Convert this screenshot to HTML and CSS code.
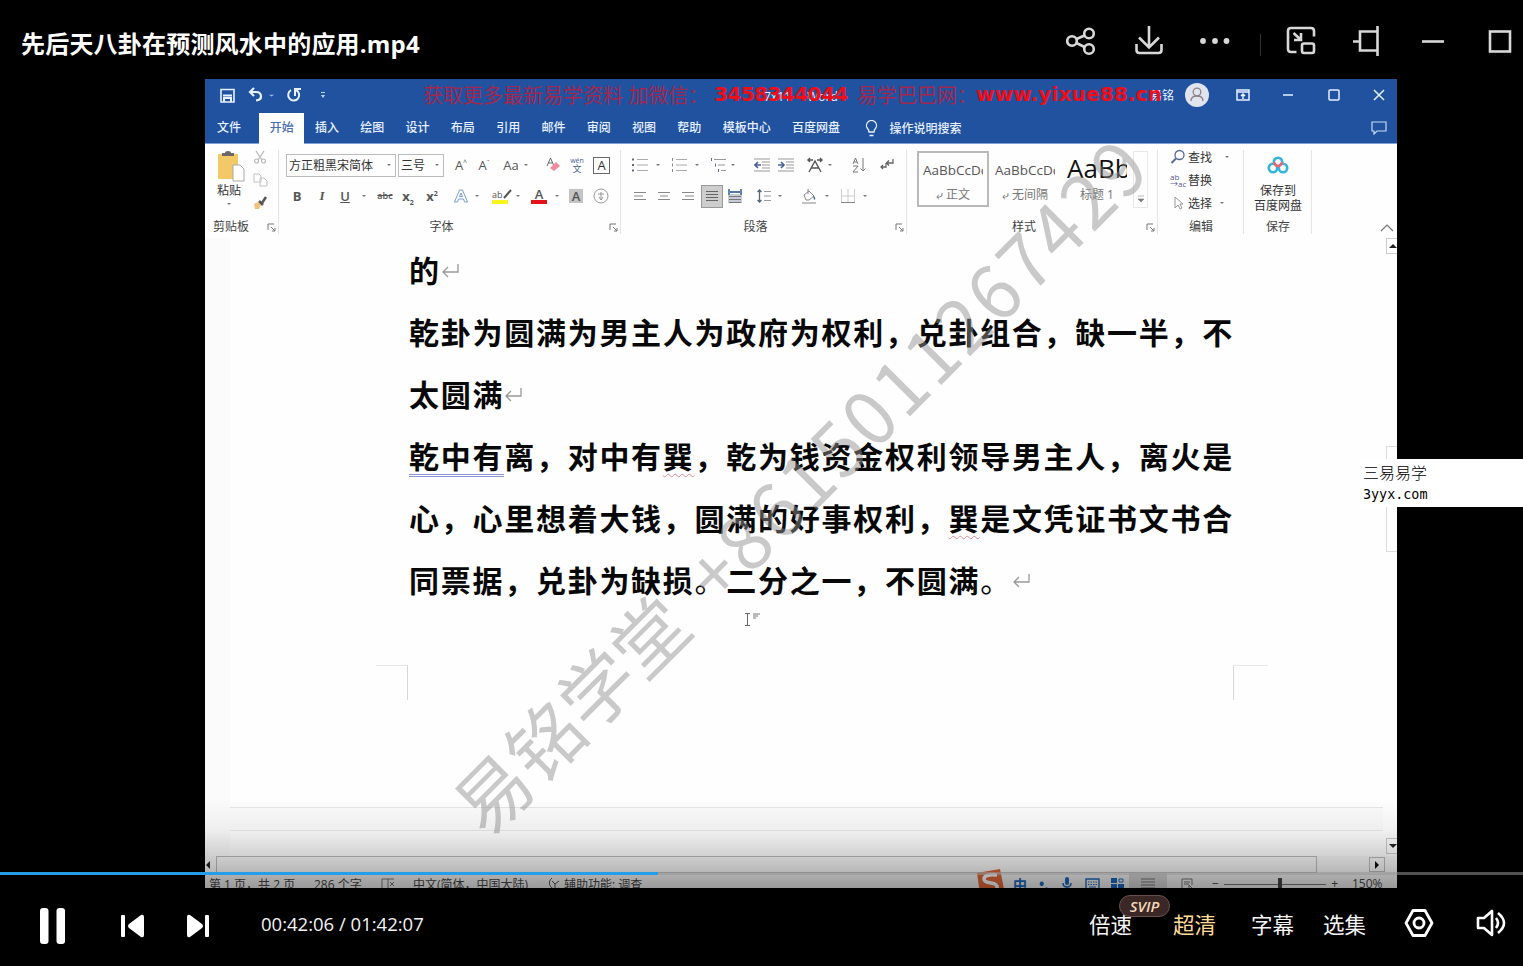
FILE: index.html
```html
<!DOCTYPE html>
<html lang="zh-CN">

<head>
    <meta charset="UTF-8">
    <meta name="viewport" content="width=device-width, initial-scale=1.0">
    <title>先后天八卦在预测风水中的应用.mp4</title>
    <link rel="stylesheet" href="styles.css">
</head>

<body>
    <svg class="sprite" width="0" height="0">
        <symbol id="caret" viewBox="0 0 8 8"><path d="M2 3l2 2 2-2z" fill="#777"/></symbol>
        <symbol id="launch" viewBox="0 0 9 9"><path d="M1 7V1h6M4 4l4 4M8 5v3H5" fill="none" stroke="#777"/></symbol>
        <symbol id="enter" viewBox="0 0 20 20"><path d="M18 3v8H3M8 6l-5 5 5 5" fill="none" stroke="#999" stroke-width="1.3"/></symbol>
    </svg>

    <div class="player">
        <header class="player-header">
            <h1 class="player-title">先后天八卦在预测风水中的应用.mp4</h1>
            <div class="window-tools">
                <svg width="30" height="30" viewBox="0 0 30 30"><g class="line"><circle cx="6" cy="15" r="4.8"/><circle cx="23" cy="7.5" r="4.8"/><circle cx="23" cy="23" r="4.8"/><path d="M10.500 13l8-3.500M10.500 17l8 4"/></g></svg>
                <svg width="30" height="30" viewBox="0 0 30 30"><path class="line" d="M15 0v21M5 11.500l10 10 10-10M2.500 18v6q0 3 3 3h19q3 0 3-3v-6"/></svg>
                <svg width="30" height="30" viewBox="0 0 30 30"><g fill="#d8d8d8"><circle cx="3" cy="15" r="2.900"/><circle cx="15" cy="15" r="2.900"/><circle cx="26.500" cy="15" r="2.900"/></g></svg>
                <span class="tool-sep"></span>
                <svg width="30" height="30" viewBox="0 0 30 30"><path class="line" d="M10.500 26H5q-3 0-3-3V5q0-3 3-3h20q3 0 3 3v5.500M7.500 7l7 6.500M15 7v7H8"/><rect class="line" x="16" y="17.500" width="12" height="9.500" rx="2"/></svg>
                <svg width="30" height="30" viewBox="0 0 30 30"><path class="line" d="M1 15.500h6M25.500 0v30M25.500 5.500H8v19h17.500"/></svg>
                <svg width="30" height="30" viewBox="0 0 30 30"><path class="line" d="M4 15.500h22"/></svg>
                <svg width="30" height="30" viewBox="0 0 30 30"><rect class="line" x="5" y="5.500" width="20" height="20"/></svg>
            </div>
        </header>

        <main class="video">
            <div class="word">
                <div class="titlebar">
                    <div class="quick">
                        <svg width="15" height="15" viewBox="0 0 15 15"><path d="M1 1.500h13v12.500H1z" fill="none" stroke="#e6f0ff" stroke-width="1.600"/><path d="M3 7.500h9M4 14v-4h7v4" fill="none" stroke="#e6f0ff" stroke-width="2"/></svg>
                        <svg width="16" height="16" viewBox="0 0 16 16"><path d="M6 1L2 5l4 4M2 5h6q5 0 5 4.500Q13 13 8 13.500" fill="none" stroke="#e6f0ff" stroke-width="2.200"/></svg>
                        <svg width="7" height="7" viewBox="0 0 8 8"><path d="M1 3l3 2 3-2z" fill="#9cc0ee"/></svg>
                        <svg width="16" height="16" viewBox="0 0 16 16"><path d="M10 3a5.500 5.500 0 1 1-5 .2M9 9V2h6" fill="none" stroke="#e6f0ff" stroke-width="2"/></svg>
                        <svg width="6" height="8" viewBox="0 0 6 8"><path d="M1 1h4v1H1zM1 4h4L3 7z" fill="#bcd5f5"/></svg>
                    </div>
                    <div class="doc-name">7x11 &nbsp;-&nbsp; Word</div>
                    <div class="account">易铭
                        <svg width="24" height="24" viewBox="0 0 24 24"><circle cx="12" cy="12" r="12" fill="#dfe4ef"/><circle cx="12" cy="9" r="3.800" fill="none" stroke="#8c8286" stroke-width="1.300"/><path d="M6 18q0-5 6-5t6 5" fill="none" stroke="#8c8286" stroke-width="1.300"/></svg>
                    </div>
                    <div class="word-window">
                        <svg width="14" height="12" viewBox="0 0 14 12"><path d="M1 1h12v10H1zM1 3h12M7 10V5M5 7l2-2 2 2" fill="none" stroke="#e6f0ff" stroke-width="1.500"/></svg>
                        <svg width="12" height="12" viewBox="0 0 12 12"><path d="M1 6h10" stroke="#e6f0ff" stroke-width="1.500"/></svg>
                        <svg width="12" height="12" viewBox="0 0 12 12"><rect x="1" y="1" width="10" height="10" rx="1" fill="none" stroke="#e6f0ff" stroke-width="1.500"/></svg>
                        <svg width="12" height="12" viewBox="0 0 12 12"><path d="M1 1l10 10M11 1L1 11" stroke="#e6f0ff" stroke-width="1.500"/></svg>
                    </div>
                </div>

                <nav class="tabs">
                    <span class="tab tab-file">文件</span>
                    <span class="tab active">开始</span>
                    <span class="tab">插入</span>
                    <span class="tab">绘图</span>
                    <span class="tab">设计</span>
                    <span class="tab">布局</span>
                    <span class="tab">引用</span>
                    <span class="tab">邮件</span>
                    <span class="tab">审阅</span>
                    <span class="tab">视图</span>
                    <span class="tab">帮助</span>
                    <span class="tab">模板中心</span>
                    <span class="tab">百度网盘</span>
                    <svg class="bulb" width="13" height="17" viewBox="0 0 13 17"><path d="M4 12q0-2-1.500-3.500a5 5 0 1 1 8 0Q9 10 9 12zM4.500 15.500h4" fill="none" stroke="#e6f0ff" stroke-width="1.300"/></svg>
                    <span class="tell-me">操作说明搜索</span>
                    <svg class="comment" width="16" height="14" viewBox="0 0 16 14"><path d="M1 1h14v9H6l-3 3v-3H1z" fill="none" stroke="#c6daf5" stroke-width="1.200"/></svg>
                </nav>

                <section class="ribbon">
                    <div class="group clipboard">
                        <div class="group-body">
                            <div class="paste">
                                <svg width="29" height="32" viewBox="0 0 29 32"><rect x="1" y="4" width="20" height="25" rx="1" fill="#f3c867"/><path d="M5 6V3h3q0-2 3-2t3 2h3v3z" fill="#6d6669"/><path d="M16 15h7l4 4v12H16z" fill="#fff" stroke="#aaa"/></svg>
                                <span>粘贴</span>
                                <svg width="8" height="8"><use href="#caret"/></svg>
                            </div>
                            <div class="clip-tools">
                                <svg width="14" height="14" viewBox="0 0 14 14"><g fill="none" stroke="#b8b8b8" stroke-width="1.200"><path d="M3 1l6 9M11 1L5 10"/><circle cx="3.500" cy="11" r="2"/><circle cx="10.500" cy="11" r="2"/></g></svg>
                                <svg width="15" height="14" viewBox="0 0 15 14"><path d="M1 1h5l2 2v6H1zM7 5h4l3 3v5H7z" fill="#fff" stroke="#c2c2c2"/></svg>
                                <svg width="14" height="14" viewBox="0 0 14 14"><path d="M1 8l4-2 3 3-2 4H2z" fill="#f0c27c"/><path d="M6 5l4 4M9 7l4-6" stroke="#555" stroke-width="2.500"/></svg>
                            </div>
                        </div>
                        <div class="group-label">剪贴板<svg width="9" height="9"><use href="#launch"/></svg></div>
                    </div>

                    <div class="group font">
                        <div class="tool-row font-row-1">
                            <span class="select font-name">方正粗黑宋简体<svg width="8" height="8"><use href="#caret"/></svg></span>
                            <span class="select font-size">三号<svg width="8" height="8"><use href="#caret"/></svg></span>
                            <span class="glyph">A<sup>^</sup></span>
                            <span class="glyph">A<sup>ˇ</sup></span>
                            <span class="glyph">Aa</span>
                            <svg width="8" height="8"><use href="#caret"/></svg>
                            <svg width="16" height="16" viewBox="0 0 16 16"><path d="M1 9l3.500-8L8 9M2.500 6h4" fill="none" stroke="#666"/><path d="M4 11l6-6 4 4-6 5z" fill="#ee8c9d"/></svg>
                            <span class="pinyin"><i>wén</i>文</span>
                            <span class="boxed">A</span>
                        </div>
                        <div class="tool-row font-row-2">
                            <span class="glyph bold">B</span>
                            <span class="glyph italic">I</span>
                            <span class="glyph underline">U</span>
                            <svg width="8" height="8"><use href="#caret"/></svg>
                            <span class="glyph strike">abc</span>
                            <span class="glyph bold">x<sub>2</sub></span>
                            <span class="glyph bold">x<sup>2</sup></span>
                            <svg width="16" height="16" viewBox="0 0 16 16"><path d="M1.500 14L6.500 2h3l5 12h-3l-1-3h-5l-1 3zM6.500 8.500h3L8 5z" fill="#fff" stroke="#7c9fd0"/></svg>
                            <svg width="8" height="8"><use href="#caret"/></svg>
                            <span class="glyph mark">ab<svg width="9" height="10" viewBox="0 0 9 10"><path d="M1 9l7-8" stroke="#555" stroke-width="2"/></svg></span>
                            <svg width="8" height="8"><use href="#caret"/></svg>
                            <span class="glyph red">A</span>
                            <svg width="8" height="8"><use href="#caret"/></svg>
                            <span class="glyph shade">A</span>
                            <svg width="16" height="16" viewBox="0 0 16 16"><circle cx="8" cy="8" r="7" fill="none" stroke="#999"/><path d="M5 6h6M8 4v8M6 9l2 3 2-3" fill="none" stroke="#999"/></svg>
                        </div>
                        <div class="group-label">字体<svg width="9" height="9"><use href="#launch"/></svg></div>
                    </div>

                    <div class="group paragraph">
                        <div class="tool-row para-row-1">
                            <svg width="16" height="16" viewBox="0 0 16 16"><path d="M5 2.500h11M5 8h11M5 13.500h11" stroke="#aaa"/><path d="M0 2.500h2M0 8h2M0 13.500h2" stroke="#668" stroke-width="2"/></svg>
                            <svg width="8" height="8"><use href="#caret"/></svg>
                            <svg width="16" height="16" viewBox="0 0 16 16"><path d="M5 2.500h11M5 8h11M5 13.500h11" stroke="#aaa"/><path d="M1.500 1v3M1.500 6.500v3M1.500 12v3" stroke="#889"/></svg>
                            <svg width="8" height="8"><use href="#caret"/></svg>
                            <svg width="16" height="16" viewBox="0 0 16 16"><path d="M4 2.500h12M8 8h7M11 13.500h5" stroke="#999"/><path d="M1.500 1v3M5.500 6.500v3M8.500 12v3" stroke="#668"/></svg>
                            <svg width="8" height="8"><use href="#caret"/></svg>
                            <svg width="16" height="16" viewBox="0 0 16 16"><path d="M0 2h16M8 5h8M8 8h8M8 11h8M0 14h16" stroke="#999"/><path d="M7 8H1M4 5L1 8l3 3" fill="none" stroke="#4a5f9a" stroke-width="1.600"/></svg>
                            <svg width="16" height="16" viewBox="0 0 16 16"><path d="M0 2h16M8 5h8M8 8h8M8 11h8M0 14h16" stroke="#999"/><path d="M0 8h6M3 5l3 3-3 3" fill="none" stroke="#4a5f9a" stroke-width="1.600"/></svg>
                            <svg width="16" height="16" viewBox="0 0 16 16"><path d="M2 15l6-11 6 11M4 11h8M1 3h5M10 3h5M3 1L1 3l2 2M13 1l2 2-2 2" fill="none" stroke="#555" stroke-width="1.400"/></svg>
                            <svg width="8" height="8"><use href="#caret"/></svg>
                            <svg width="16" height="16" viewBox="0 0 16 16"><path d="M2 7l2.500-6L7 7M3 5h3M2 9h5l-5 6h5M12 1v13M9.500 11.500L12 14l2.500-2.500" fill="none" stroke="#777"/></svg>
                            <svg width="16" height="16" viewBox="0 0 16 16"><path d="M14 2v4H8M10 3.500L7.500 6l2.500 2.500" fill="none" stroke="#666" stroke-width="1.300"/><path d="M7 6v4H2M4 8l-2 2 2 2" fill="none" stroke="#666" stroke-width="1.300"/></svg>
                        </div>
                        <div class="tool-row para-row-2">
                            <svg width="16" height="16" viewBox="0 0 16 16"><path d="M2 4.500h12M2 8h9M2 11.500h12" stroke="#888"/></svg>
                            <svg width="16" height="16" viewBox="0 0 16 16"><path d="M2 4.500h12M4 8h8M2 11.500h12" stroke="#888"/></svg>
                            <svg width="16" height="16" viewBox="0 0 16 16"><path d="M2 4.500h12M5 8h9M2 11.500h12" stroke="#888"/></svg>
                            <span class="pressed"><svg width="16" height="16" viewBox="0 0 16 16"><path d="M2 3.500h12M2 6.500h12M2 9.500h12M2 12.500h12" stroke="#666"/></svg></span>
                            <svg width="16" height="16" viewBox="0 0 16 16"><path d="M1 6h14v9H1z" fill="#c8ccd6"/><path d="M2 8.500h12M2 11.500h12M2 14.500h12" stroke="#777"/><path d="M2 1v6M14 1v6M3 4h10" stroke="#5474b0" stroke-width="1.800"/></svg>
                            <svg width="16" height="16" viewBox="0 0 16 16"><path d="M8 3.500h7M8 8h7M8 12.500h7" stroke="#999"/><path d="M3.500 2v12M1.500 4l2-2 2 2M1.500 12l2 2 2-2" fill="none" stroke="#567" stroke-width="1.300"/></svg>
                            <svg width="8" height="8"><use href="#caret"/></svg>
                            <svg width="16" height="16" viewBox="0 0 16 16"><path d="M3 7l5-4 5 5-5 4H5zM7 1v5M1 15h14" fill="none" stroke="#888"/><path d="M12 7q4 4 1 5z" fill="#4a5f9a"/></svg>
                            <svg width="8" height="8"><use href="#caret"/></svg>
                            <svg width="16" height="16" viewBox="0 0 16 16"><path d="M1.500 1v13M8 1v13M14.500 1v13M1 8h14" stroke="#ccc"/><path d="M1 14.500h14" stroke="#888"/></svg>
                            <svg width="8" height="8"><use href="#caret"/></svg>
                        </div>
                        <div class="group-label">段落<svg width="9" height="9"><use href="#launch"/></svg></div>
                    </div>

                    <div class="group styles">
                        <div class="group-body">
                            <div class="style-item chosen"><b>AaBbCcDc</b><span>⤶ 正文</span></div>
                            <div class="style-item"><b>AaBbCcDc</b><span>⤶ 无间隔</span></div>
                            <div class="style-item heading"><b>AaBb</b><span>标题 1</span></div>
                            <div class="style-scroll"><svg width="8" height="8" viewBox="0 0 8 8"><path d="M1 1h6M1 4h6L4 7z" fill="#777" stroke="#888" stroke-width=".6"/></svg></div>
                        </div>
                        <div class="group-label">样式<svg width="9" height="9"><use href="#launch"/></svg></div>
                    </div>

                    <div class="group editing">
                        <div class="group-body">
                            <div class="edit-item"><svg width="16" height="16" viewBox="0 0 16 16"><circle cx="9.500" cy="6" r="4.500" fill="none" stroke="#566b98" stroke-width="1.300"/><path d="M6 9.500L1.500 14" stroke="#566b98" stroke-width="2"/></svg>查找<svg class="wide" width="8" height="8"><use href="#caret"/></svg></div>
                            <div class="edit-item"><span class="swap">ab<br>→ac</span>替换</div>
                            <div class="edit-item"><svg width="16" height="16" viewBox="0 0 16 16"><path d="M5 2v11l3-3 2 4 2-1-2-4h3z" fill="#fff" stroke="#999"/></svg>选择<svg width="8" height="8"><use href="#caret"/></svg></div>
                        </div>
                        <div class="group-label">编辑</div>
                    </div>

                    <div class="group netdisk">
                        <div class="group-body">
                            <svg width="22" height="18" viewBox="0 0 22 18"><g fill="none" stroke-width="2.600"><circle cx="6" cy="12" r="4.200" stroke="#35b5d8"/><circle cx="16" cy="12" r="4.200" stroke="#35b5d8"/><path d="M6.800 6a4.200 4.200 0 1 1 8.400 0" stroke="#35b5d8"/><path d="M6.800 6q1 3.500 4.200 4.200 3.200-.7 4.200-4.200" stroke="#e86478"/></g></svg>
                            <span>保存到<br>百度网盘</span>
                        </div>
                        <div class="group-label">保存</div>
                    </div>
                    <svg class="collapse" width="14" height="8" viewBox="0 0 14 8"><path d="M1 7l6-6 6 6" fill="none" stroke="#777" stroke-width="1.200"/></svg>
                </section>

                <section class="document">
                    <article class="page">
                        <p>的<svg class="enter" width="20" height="20"><use href="#enter"/></svg></p>
                        <p>乾卦为圆满为男主人为政府为权利，兑卦组合，缺一半，不</p>
                        <p>太圆满<svg class="enter" width="20" height="20"><use href="#enter"/></svg></p>
                        <p><span class="grammar">乾中有</span>离，对中有<span class="spelling">巽</span>，乾为钱资金权利领导男主人，离火是</p>
                        <p>心，心里想着大钱，圆满的好事权利，<span class="spelling">巽</span>是文凭证书文书合</p>
                        <p>同票据，兑卦为缺损<span class="stop">。</span>二分之一，不圆满<span class="stop">。</span><svg class="enter" width="20" height="20"><use href="#enter"/></svg></p>
                        <div class="pointer"><svg width="17" height="15" viewBox="0 0 17 15"><path d="M1 1.500h5M3.500 1.500v12M1 13.500h5" fill="none" stroke="#666"/><path d="M9 2h7M9 4h5M9 6h3" stroke="#777"/></svg></div>
                        <div class="crop-marks"><i class="crop-left"></i><i class="crop-right"></i></div>
                    </article>
                    <div class="next-page"></div>
                    <aside class="v-scroll">
                        <span class="arrow"><svg width="8" height="5" viewBox="0 0 8 5"><path d="M0 4l4-4 4 4z" fill="#222"/></svg></span>
                        <span class="thumb"></span>
                        <span class="arrow"><svg width="8" height="5" viewBox="0 0 8 5"><path d="M0 0l4 4 4-4z" fill="#222"/></svg></span>
                    </aside>
                </section>
                <div class="h-scroll">
                    <svg width="6" height="8" viewBox="0 0 6 8"><path d="M5 0v8L1 4z" fill="#222"/></svg>
                    <span class="h-thumb"></span>
                    <span class="h-arrow"><svg width="6" height="8" viewBox="0 0 6 8"><path d="M1 0v8l4-4z" fill="#111"/></svg></span>
                </div>
                <footer class="status">
                    <span class="pages">第 1 页，共 2 页</span>
                    <span class="words">286 个字</span>
                    <svg width="15" height="12" viewBox="0 0 15 12"><path d="M1 1h6v10H1zM7 1h6M7 11h6M9 4l4 4M13 4L9 8" fill="none" stroke="#777"/></svg>
                    <span class="lang">中文(简体，中国大陆)</span>
                    <svg width="15" height="14" viewBox="0 0 15 14"><path d="M6 1a6 6 0 1 0 7 10M6 4l3 3 4-3M9 7v5" fill="none" stroke="#555"/></svg>
                    <span class="access">辅助功能: 调查</span>
                    <svg class="sogou" width="30" height="26" viewBox="0 0 30 26"><path d="M1 5L24 1l5 25H4z" fill="#e2673a"/><path d="M21 7q-13-1-13 4 0 3 7 4t6 5q-2 4-13 2" fill="none" stroke="#fff" stroke-width="3.500"/></svg>
                    <span class="ime">中</span>
                    <span class="ime punct">•,</span>
                    <svg class="mic" width="10" height="14" viewBox="0 0 10 14"><rect x="3" y="0" width="4" height="8" rx="2" fill="#1f68bd"/><path d="M1 6q0 4 4 4t4-4M5 10v4" fill="none" stroke="#1f68bd" stroke-width="1.500"/></svg>
                    <svg class="keys" width="15" height="12" viewBox="0 0 15 12"><path d="M1 1h13v10H1z" fill="none" stroke="#1f68bd" stroke-width="1.400"/><path d="M3 4h9M3 6.500h9" stroke="#1f68bd" stroke-width="1.200" stroke-dasharray="1.500 1"/><path d="M4 9h7" stroke="#1f68bd"/></svg>
                    <svg class="apps" width="13" height="12" viewBox="0 0 13 12"><path d="M0 0h6v5H0zM0 6h6v6H0zM7 6h6v6H7z" fill="#1f68bd"/><path d="M8 1h4v3H8z" fill="none" stroke="#1f68bd"/></svg>
                    <span class="view"><svg width="14" height="12" viewBox="0 0 14 12"><path d="M0 1h14M0 4h14M0 7h14M0 10h14" stroke="#777"/></svg></span>
                    <svg class="web" width="14" height="12" viewBox="0 0 14 12"><path d="M1 11V1h10v6M3 4h6M3 6h5M8 7l5 5M8 7v4" fill="none" stroke="#777"/></svg>
                    <span class="zoom-bar"><i></i></span>
                    <span class="percent">150%</span>
                </footer>

                <div class="promo">
                    <span>获取更多最新易学资料&nbsp;加微信：</span><strong class="qq">3458344044</strong><span class="site-label">易学巴巴网：</span><strong class="site">www.yixue88.cn</strong>
                </div>
                <div class="watermark">易铭学堂<span>+8615011267429</span></div>
                <div class="fade"></div>
            </div>
        </main>

        <div class="progress"><span style="width: 43.200%"></span></div>

        <footer class="controls">
            <svg class="pause" width="26" height="36" viewBox="0 0 26 36"><rect x="0" y="0" width="8.500" height="36" rx="3"/><rect x="16.500" y="0" width="8.500" height="36" rx="3"/></svg>
            <svg class="prev" width="24" height="24" viewBox="0 0 24 24"><rect x="0" y="1" width="4" height="22" rx="1"/><path d="M20 1q3-1 3 2v18q0 3-3 2L8 14q-2-2 0-4z"/></svg>
            <svg class="next" width="24" height="24" viewBox="0 0 24 24"><path d="M4 1Q1 0 1 3v18q0 3 3 2l12-9q2-2 0-4z"/><rect x="19" y="1" width="4" height="22" rx="1"/></svg>
            <span class="time">00:42:06 / 01:42:07</span>
            <div class="options">
                <span class="speed">倍速<em class="svip">SVIP</em></span>
                <span class="quality">超清</span>
                <span class="subtitle">字幕</span>
                <span class="episodes">选集</span>
                <svg class="settings" width="30" height="28" viewBox="0 0 30 28"><g fill="none" stroke="#fff" stroke-width="2.800"><path d="M9 1.500h12L28 14l-7 12.500H9L2 14z" stroke-linejoin="round"/><circle cx="15" cy="14" r="5"/></g></svg>
                <svg class="volume" width="31" height="28" viewBox="0 0 31 28"><path d="M2 9h6l8-7v24l-8-7H2zM20 9q4 5 0 10M22 4q12 10 0 20" fill="none" stroke="#fff" stroke-width="2.600" stroke-linejoin="round"/></svg>
            </div>
        </footer>

        <div class="side-note">
            <span class="note-name">三易易学</span>
            <span class="note-site">3yyx.com</span>
        </div>
    </div>
</body>

</html>
```
FILE: styles.css
```css
* {
    margin: 0;
    padding: 0;
    box-sizing: border-box;
}

body {
    background-color: #000;
    font-family: "Open Sans", "Noto Sans CJK SC", sans-serif;
    overflow: hidden;
}

svg {
    display: block;
    flex: none;
}

.sprite {
    position: absolute;
}

.player {
    position: relative;
    width: 1523px;
    height: 966px;
    display: flex;
    flex-direction: column;
    background: #000;
}

/* player header */
.player-header {
    height: 79px;
    display: flex;
    justify-content: space-between;
    padding: 26px 8px 0 21px;
}

.player-title {
    color: #fff;
    font-size: 24px;
    line-height: 36px;
    font-weight: 700;
    letter-spacing: 0.2px;
    white-space: nowrap;
}

.window-tools {
    display: grid;
    grid-template-columns: 68px 66px 60px 26px 66px 66px 67px 30px;
    height: 30px;
}

.line {
    fill: none;
    stroke: #d8d8d8;
    stroke-width: 2.6px;
}

.tool-sep {
    width: 1px;
    height: 22px;
    margin-top: 8px;
    background: #333;
}

/* recorded screen */
.video {
    height: 809px;
    padding-left: 205px;
}

.word {
    position: relative;
    width: 1192px;
    height: 809px;
    overflow: hidden;
    background: #fefefe;
    font-size: 12px;
    color: #333;
}

.titlebar {
    height: 34px;
    display: flex;
    align-items: center;
    background: #2152a0;
    color: #e6f0ff;
}

.quick {
    display: grid;
    grid-template-columns: 28px 20px 18px 34px 8px;
    align-items: center;
    padding-left: 15px;
    margin-top: -2px;
}

.doc-name {
    margin-left: 436px;
    width: 160px;
    white-space: nowrap;
}

.account {
    margin-left: 226px;
    display: flex;
    align-items: center;
    gap: 11px;
    flex: none;
    margin-top: -3px;
}

.word-window {
    display: grid;
    grid-template-columns: 46px 46px 45px 12px;
    align-items: center;
    margin-left: 27px;
    margin-top: -3px;
}

.tabs {
    height: 31px;
    display: flex;
    align-items: center;
    background: #2152a0;
    border-bottom: 1px solid #7da3d8;
    color: #e6f0ff;
    font-weight: 500;
}

.tab {
    height: 31px;
    line-height: 30px;
    padding: 0 10.65px;
    flex: none;
}

.tab-file {
    padding: 0 18px 0 12px;
}

.tab.active {
    color: #4a6db0;
    background: #fefefe;
}

.bulb {
    margin-left: 14px;
}

.tell-me {
    margin-left: 12px;
}

.comment {
    margin-left: auto;
    margin-right: 10px;
}

/* ribbon */
.ribbon {
    height: 94px;
    display: flex;
    background: #fefefe;
    position: relative;
}

.group {
    display: flex;
    flex-direction: column;
    position: relative;
    flex: none;
}

.group::after {
    content: "";
    position: absolute;
    right: 0;
    top: 6px;
    width: 1px;
    height: 84px;
    background: #e4e4e4;
}

.group-body {
    height: 72px;
    display: flex;
}

.group-label {
    height: 22px;
    line-height: 22px;
    text-align: center;
    position: relative;
    color: #444;
}

.group-label svg {
    position: absolute;
    right: 3px;
    top: 7px;
}

.clipboard {
    width: 74px;
}

.clipboard .group-label {
    text-align: left;
    padding-left: 8px;
}

.paste {
    width: 48px;
    display: flex;
    flex-direction: column;
    align-items: center;
    padding-top: 6px;
}

.paste > svg:first-child {
    margin-left: 4px;
}

.paste span {
    line-height: 18px;
}

.clip-tools {
    padding-top: 6px;
    display: flex;
    flex-direction: column;
    gap: 9px;
}

.font {
    width: 342px;
}

.paragraph {
    width: 286px;
}

.font .group-label,
.paragraph .group-label {
    padding-right: 17px;
}

.tool-row {
    display: grid;
    align-items: center;
}

.font-row-1 {
    height: 42px;
    padding-left: 7px;
    grid-template-columns: 112px 55px 23px 27px 19px 24px 23px 24px 16px;
}

.font-row-2 {
    height: 20px;
    margin-bottom: 10px;
    padding-left: 10px;
    grid-template-columns: 25px 23px 23px 17px 23px 24px 29px 20px 19px 22px 17px 22px 16px 24px 16px;
}

.para-row-1 {
    height: 42px;
    padding-left: 11px;
    grid-template-columns: 22px 17px 22px 17px 19px 25px 24px 29px 19px 25px 28px 16px;
}

.para-row-2 {
    height: 20px;
    margin-bottom: 10px;
    padding-left: 11px;
    grid-template-rows: 20px;
    grid-template-columns: 24px 24px 21px 26px 29px 20px 25px 22px 17px 21px 8px;
}

.select {
    height: 23px;
    border: 1px solid #bbb;
    display: flex;
    align-items: center;
    justify-content: space-between;
    padding: 0 2px;
    white-space: nowrap;
}

.font-name {
    width: 110px;
}

.font-size {
    width: 46px;
}

.glyph {
    width: 16px;
    text-align: center;
    font-size: 13px;
    line-height: 16px;
    color: #555;
    white-space: nowrap;
}

.glyph sup,
.glyph sub {
    font-size: 7px;
    line-height: 0;
}

.bold {
    font-weight: 700;
}

.italic {
    font-family: "Liberation Serif", serif;
    font-style: italic;
    font-weight: 700;
}

.underline {
    font-weight: 600;
    text-decoration: underline;
}

.strike {
    font-size: 9px;
    font-weight: 600;
    text-decoration: line-through;
}

.mark {
    display: flex;
    font-size: 9px;
    line-height: 11px;
    border-bottom: 4px solid #f7f71d;
}

.red {
    line-height: 12px;
    font-weight: 600;
    border-bottom: 4px solid #e3131c;
}

.shade {
    width: 14px;
    font-weight: 600;
    line-height: 14px;
    background: #c4c4c4;
}

.boxed {
    width: 17px;
    height: 17px;
    border: 1px solid #666;
    text-align: center;
    line-height: 15px;
    font-size: 13px;
}

.pinyin {
    width: 16px;
    font-size: 9px;
    line-height: 8px;
    text-align: center;
    color: #4c5e90;
}

.pinyin i {
    display: block;
    font-size: 7px;
    font-style: normal;
}

.pressed {
    width: 22px;
    height: 23px;
    display: flex;
    align-items: center;
    justify-content: center;
    background: #cdcdcd;
    border: 1px solid #999;
}

.styles {
    width: 251px;
}

.styles .group-body {
    padding: 7px 0 0 10px;
}

.styles .group-label {
    padding-right: 17px;
}

.style-item {
    width: 72px;
    height: 56px;
    padding: 6px 4px 0;
    text-align: center;
    color: #777;
    border: 2px solid transparent;
}

.style-item b {
    display: block;
    height: 26px;
    line-height: 22px;
    font-size: 13.5px;
    font-weight: 400;
    color: #555;
    overflow: hidden;
    text-align: left;
    white-space: nowrap;
}

.style-item span {
    display: block;
    line-height: 20px;
    white-space: nowrap;
}

.style-item.chosen {
    border-color: #b9b9b9;
}

.style-item.heading b {
    font-size: 26px;
    color: #111;
    line-height: 18px;
}

.style-scroll {
    width: 15px;
    height: 57px;
    border: 1px solid #e8e8e8;
    display: flex;
    align-items: flex-end;
    justify-content: center;
    padding-bottom: 4px;
}

.editing {
    width: 86px;
}

.editing .group-body {
    flex-direction: column;
    padding: 1px 0 0 12px;
}

.edit-item {
    height: 23px;
    display: flex;
    align-items: center;
    gap: 2px;
    color: #333;
}

.edit-item svg + svg {
    margin-left: 4px;
}

.edit-item .wide {
    margin-left: 9px;
}

.swap {
    width: 16px;
    font-size: 8px;
    line-height: 7px;
    color: #5a5a90;
}

.netdisk {
    width: 68px;
}

.netdisk .group-body {
    flex-direction: column;
    align-items: center;
    padding-top: 12px;
    gap: 9px;
    text-align: center;
    line-height: 15px;
}

.collapse {
    margin: 80px 3px 0 auto;
}

/* document area */
.document {
    height: 618px;
    display: grid;
    grid-template-columns: 1fr 14px;
    grid-template-rows: 570px 1fr;
    background: #fbfbfb;
}

.page {
    margin-left: 25px;
    padding: 0 0 0 179px;
    background: #fefefe;
    border-bottom: 1px solid #e6e6e6;
}

.page p {
    height: 62px;
    line-height: 62px;
    font-family: "Noto Sans CJK SC", sans-serif;
    font-size: 30px;
    font-weight: 700;
    letter-spacing: 1.73px;
    white-space: nowrap;
    color: #080808;
}

.enter {
    display: inline-block;
    vertical-align: 1px;
    margin-left: -1px;
}

.stop {
    font-weight: 400;
}

.grammar {
    border-bottom: 3px double #8c90d4;
}

.grammar,
.spelling {
    display: inline-block;
    height: 40px;
    line-height: 36px;
}

.spelling {
    text-decoration: underline wavy #e58a96 1px;
    text-underline-offset: 5px;
}

.pointer {
    padding: 2px 0 0 335px;
}

.crop-marks {
    display: flex;
    justify-content: space-between;
    margin: 38px 115px 0 -33px;
}

.crop-left,
.crop-right {
    width: 32px;
    height: 35px;
    border-top: 1px solid #e8e8e8;
}

.crop-left {
    border-right: 1px solid #d8d8d8;
}

.crop-right {
    width: 35px;
    border-left: 1px solid #d8d8d8;
}

.next-page {
    grid-row: 2;
    margin: 22px 0 0 25px;
    border-top: 1px solid #e8e8e8;
    background: #fefefe;
}

.v-scroll {
    grid-column: 2;
    grid-row: 1 / 3;
    display: flex;
    flex-direction: column;
    align-items: flex-end;
    background: #fefefe;
}

.arrow {
    width: 11px;
    height: 16px;
    border: 1px solid #ccc;
    border-right: 0;
    display: flex;
    align-items: center;
    justify-content: flex-end;
}

.thumb {
    width: 11px;
    height: 106px;
    margin: 192px 0 286px;
    border: 1px solid #ddd;
    border-right: 0;
}

.h-scroll {
    height: 17px;
    display: flex;
    align-items: center;
    background: #f8f8f8;
}

.h-thumb {
    width: 1101px;
    height: 17px;
    margin-left: 5px;
    border: 1px solid #bbb;
}

.h-arrow {
    width: 16px;
    height: 15px;
    margin-left: 52px;
    border: 1px solid #bbb;
    display: flex;
    align-items: center;
    justify-content: center;
}

.status {
    height: 21px;
    display: flex;
    align-items: center;
    background: #f3f3f3;
    padding-left: 4px;
    white-space: nowrap;
    color: #444;
}

.pages {
    width: 105px;
}

.words {
    width: 67px;
}

.lang {
    width: 133px;
    margin-left: 17px;
}

.access {
    width: 412px;
    margin-left: 3px;
}

.sogou {
    align-self: flex-start;
    margin-top: -5px;
}

.ime {
    width: 24px;
    margin-left: 7px;
    font-size: 14px;
    font-weight: 700;
    color: #1f68bd;
}

.punct {
    width: 16px;
    margin-left: 2px;
}

.mic {
    margin-left: 7px;
}

.keys {
    margin-left: 13px;
}

.apps {
    margin-left: 11px;
}

.view {
    width: 38px;
    height: 21px;
    margin-left: 5px;
    display: flex;
    align-items: center;
    justify-content: center;
    background: #d8d8d8;
}

.web {
    margin-left: 14px;
}

.zoom-bar {
    width: 126px;
    height: 12px;
    margin: 0 14px 0 17px;
    display: flex;
    align-items: center;
}

.zoom-bar::before {
    content: "−";
    width: 12px;
}

.zoom-bar::after {
    content: "+";
    width: 12px;
    text-align: right;
}

.zoom-bar i {
    flex: 1;
    height: 12px;
    background: linear-gradient(#444, #444) 54px 0 / 4px 12px no-repeat, linear-gradient(#777, #777) 0 6px / 100% 1px no-repeat;
}

/* things laid over the recording */
.promo {
    position: absolute;
    left: 218px;
    top: 0;
    height: 30px;
    display: flex;
    align-items: center;
    font-size: 20px;
    color: #a02850;
    white-space: nowrap;
}

.promo strong {
    font-family: "DejaVu Sans", sans-serif;
    color: #ee0d18;
}

.promo span {
    width: 291px;
}

.promo .qq {
    width: 143px;
    font-size: 20px;
    letter-spacing: -0.55px;
}

.promo .site-label {
    width: 119px;
}

.promo .site {
    font-size: 20px;
    letter-spacing: 0.15px;
}

.watermark {
    position: absolute;
    left: 259px;
    top: 688px;
    font-family: "Noto Sans CJK SC", sans-serif;
    font-size: 74px;
    line-height: 100px;
    color: rgba(145, 145, 145, 0.48);
    white-space: nowrap;
    transform: rotate(-45deg);
    transform-origin: 0 50%;
}

.watermark span {
    margin-left: 32px;
    letter-spacing: 3px;
}

.fade {
    position: absolute;
    left: 0;
    right: 0;
    bottom: 0;
    height: 90px;
    background: linear-gradient(rgba(0, 0, 0, 0), rgba(0, 0, 0, 0.05) 35%, rgba(0, 0, 0, 0.22) 75%, rgba(0, 0, 0, 0.37));
}

.progress {
    height: 3px;
    margin-top: -16px;
    position: relative;
    background: rgba(150, 150, 150, 0.55);
}

.progress span {
    display: block;
    height: 3px;
    background: #259de8;
}

.controls {
    height: 91px;
    padding-top: 13px;
    display: flex;
    align-items: center;
    color: #f4f4f4;
}

.pause {
    margin-left: 40px;
}

.prev {
    margin-left: 55px;
}

.next {
    margin-left: 41px;
}

.pause,
.prev,
.next {
    margin-top: -2px;
    fill: #fff;
}

.time {
    margin: -8px 0 0 51px;
    font-size: 18.5px;
    white-space: nowrap;
}

.options {
    margin: -7px 16px 0 auto;
    display: flex;
    align-items: center;
    font-size: 21.5px;
    white-space: nowrap;
}

.speed {
    position: relative;
}

.svip {
    position: absolute;
    left: 30px;
    top: -13px;
    width: 51px;
    height: 22px;
    border: 1px solid #66504d;
    border-radius: 11px;
    background: #3a2726;
    color: #f5d9b8;
    font: italic 15px/20px "Open Sans", sans-serif;
    font-weight: 600;
    text-align: center;
}

.quality {
    margin-left: 41px;
    color: #ffdd96;
}

.subtitle {
    margin-left: 35px;
}

.episodes {
    margin-left: 29px;
}

.settings {
    margin: -2px 0 0 38px;
}

.volume {
    margin: -2px 0 0 42px;
}

.side-note {
    position: absolute;
    left: 1360px;
    top: 459px;
    width: 163px;
    height: 48px;
    padding: 4px 3px;
    display: flex;
    flex-direction: column;
    background: #fff;
    color: #000;
    font-size: 16px;
    line-height: 21px;
}

.note-name {
    font-weight: 300;
}

.note-site {
    font-family: "DejaVu Sans Mono", monospace;
    font-size: 13.400px;
}
```
